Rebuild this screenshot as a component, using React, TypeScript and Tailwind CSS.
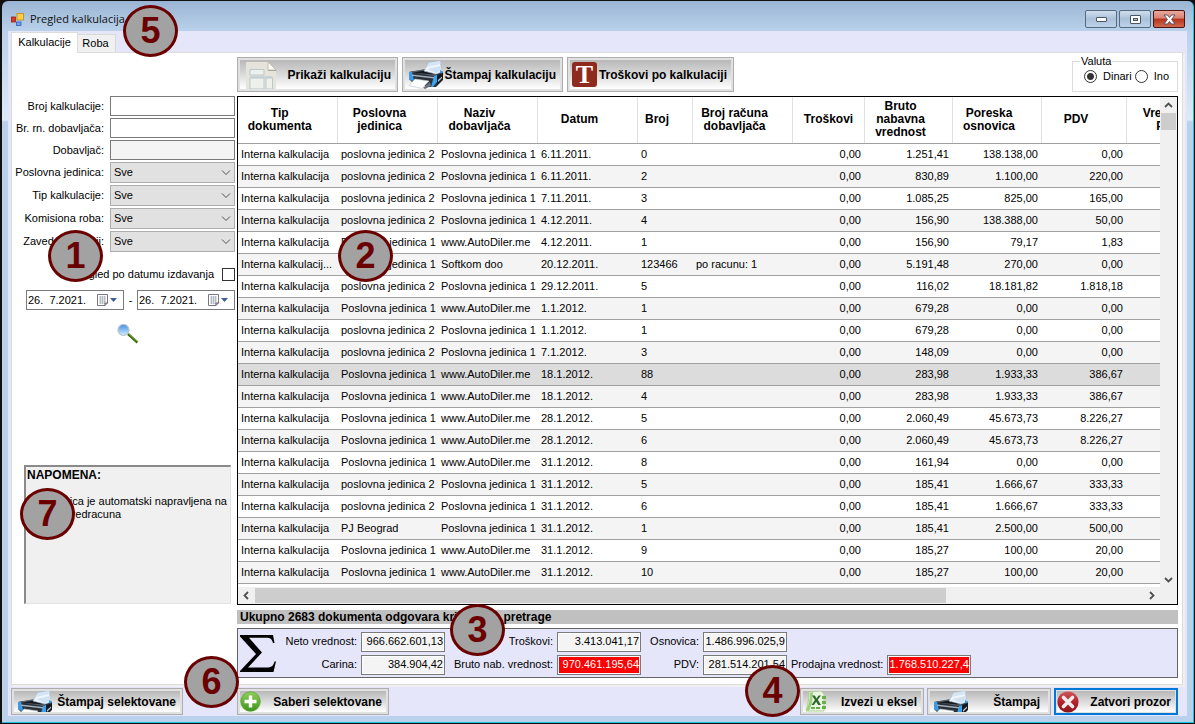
import React from "react";

type Row = [string, string, string, string, string, string, string, string, string, string];

const IK = "Interna kalkulacija";
const P1 = "Poslovna jedinica 1";
const P2 = "poslovna jedinica 2";
const AD = "www.AutoDiler.me";

const rows: Row[] = [
  [IK, P2, P1, "6.11.2011.", "0", "", "0,00", "1.251,41", "138.138,00", "0,00"],
  [IK, P2, P1, "6.11.2011.", "2", "", "0,00", "830,89", "1.100,00", "220,00"],
  [IK, P2, P1, "7.11.2011.", "3", "", "0,00", "1.085,25", "825,00", "165,00"],
  [IK, P2, P1, "4.12.2011.", "4", "", "0,00", "156,90", "138.388,00", "50,00"],
  [IK, P1, AD, "4.12.2011.", "1", "", "0,00", "156,90", "79,17", "1,83"],
  ["Interna kalkulacij...", P1, "Softkom doo", "20.12.2011.", "123466", "po racunu: 1", "0,00", "5.191,48", "270,00", "0,00"],
  [IK, P2, P1, "29.12.2011.", "5", "", "0,00", "116,02", "18.181,82", "1.818,18"],
  [IK, P1, AD, "1.1.2012.", "1", "", "0,00", "679,28", "0,00", "0,00"],
  [IK, P2, P1, "1.1.2012.", "1", "", "0,00", "679,28", "0,00", "0,00"],
  [IK, P2, P1, "7.1.2012.", "3", "", "0,00", "148,09", "0,00", "0,00"],
  [IK, P1, AD, "18.1.2012.", "88", "", "0,00", "283,98", "1.933,33", "386,67"],
  [IK, P1, AD, "18.1.2012.", "4", "", "0,00", "283,98", "1.933,33", "386,67"],
  [IK, P1, AD, "28.1.2012.", "5", "", "0,00", "2.060,49", "45.673,73", "8.226,27"],
  [IK, P1, AD, "28.1.2012.", "6", "", "0,00", "2.060,49", "45.673,73", "8.226,27"],
  [IK, P1, AD, "31.1.2012.", "8", "", "0,00", "161,94", "0,00", "0,00"],
  [IK, P2, P1, "31.1.2012.", "5", "", "0,00", "185,41", "1.666,67", "333,33"],
  [IK, P2, P1, "31.1.2012.", "6", "", "0,00", "185,41", "1.666,67", "333,33"],
  [IK, "PJ Beograd", P1, "31.1.2012.", "1", "", "0,00", "185,41", "2.500,00", "500,00"],
  [IK, P1, AD, "31.1.2012.", "9", "", "0,00", "185,27", "100,00", "20,00"],
  [IK, P1, AD, "31.1.2012.", "10", "", "0,00", "185,27", "100,00", "20,00"],
];

const columns = [
  { title: "Tip\ndokumenta", width: "w-[99px] pr-4" },
  { title: "Poslovna\njedinica", width: "w-[100px] pr-4" },
  { title: "Naziv\ndobavljača", width: "w-[100px] pr-4" },
  { title: "Datum", width: "w-[100px] pr-4" },
  { title: "Broj", width: "w-[55px] pr-4" },
  { title: "Broj računa\ndobavljača", width: "w-[100px] pr-4" },
  { title: "Troškovi", width: "w-[72px] pr-0" },
  { title: "Bruto\nnabavna\nvrednost", width: "w-[88px] pr-4" },
  { title: "Poreska\nosnovica", width: "w-[89px] pr-4" },
  { title: "PDV", width: "w-[85px] pr-4" },
  { title: "Vrednost\nPDV", width: "w-[100px] pr-4" },
];

function PrinterIcon({ cropped = false }: { cropped?: boolean }) {
  return (
    <svg
      className={cropped ? "ml-1 h-[21px] w-[34px] shrink-0" : "ml-1 h-7 w-[34px] shrink-0"}
      viewBox={cropped ? "0 0 34 21" : "0 0 34 28"}
      aria-hidden="true"
    >
      <path d="M0 11 5 10 29 8 34 11 34 19 27 26 20 26 3 21 0 18Z" fill="#2a3038" />
      <path d="M1 11 16 8 32 10 25 15Z" fill="#57616c" />
      <path d="M4 11.500 16 9.500 28 11 24 13.500Z" fill="#14171b" />
      <path d="M15 10 19.500 2 31 0 33 11 27 13Z" fill="#f1f6fb" stroke="#a6bfd8" strokeWidth=".7" />
      <path d="M19.500 2 31 0 31.500 3 18 6Z" fill="#d3e5f6" />
      <path d="M18 8 31.500 5 32.500 9 27 12Z" fill="#cfe2f4" />
      <path d="M0 11 3 11 5 19 3 20 0 18Z" fill="#3b9be8" />
      <path d="M25 15 28 14 28 21 24 26 22 26Z" fill="#3aa2f2" />
      <path d="M31 9 34 11 34 14 31 12Z" fill="#3a93df" />
      <path d="M28 15 34 11.500 34 18 28 24Z" fill="#161a1f" />
      <path d="M3 13.500 25 16 25 17.500 3 15Z" fill="#a3adb8" />
      <path d="M6 18 20 20 13 27.500 0 24.500Z" fill="#fcfdfe" stroke="#bcc5ce" strokeWidth=".6" />
      <path d="M14 27 21 21 22 25 16 28Z" fill="#6d7680" />
      <path d="M29 19 33 15.500 33 17 29 21Z" fill="#c3c9d0" />
    </svg>
  );
}

function DocumentIcon() {
  return (
    <svg className="ml-1.5 h-[27px] w-[30px] shrink-0 self-end" viewBox="0 0 30 27" aria-hidden="true">
      <path d="M0 0H22L30 8V27H0Z" fill="#e5e3da" />
      <path d="M22 0 30 8H22Z" fill="#fbfaf5" stroke="#b9b6aa" strokeWidth=".8" />
      <path d="M22 8.500H30" stroke="#a9a69a" />
      <path d="M4 7.500H18V13H4ZM4 16H18V27H4ZM20 16H26.500V27H20Z" fill="#eef0ec" stroke="#b7cad1" />
      <path d="M4 15H26.500" stroke="#b4c8d0" />
    </svg>
  );
}

function LetterIcon() {
  return (
    <span className="ml-0.5 flex h-[25px] w-[25px] shrink-0 items-center justify-center rounded-[3px] bg-[#8f2b1e]">
      <span className="font-['Liberation_Serif',serif] text-[26px] leading-[25px] font-bold text-white">T</span>
    </span>
  );
}

function PlusIcon() {
  return (
    <svg className="h-[21px] w-[21px] shrink-0" viewBox="0 0 21 21" aria-hidden="true">
      <defs>
        <linearGradient id="plusFill" x1="0" y1="0" x2="0" y2="1">
          <stop offset="0" stopColor="#8fd05c" />
          <stop offset="1" stopColor="#3f9416" />
        </linearGradient>
      </defs>
      <circle cx="10.500" cy="10.500" r="9.800" fill="url(#plusFill)" stroke="#5fa33a" strokeWidth=".8" />
      <path d="M8.800 4.500h3.400v4.300h4.300v3.400h-4.300v4.300H8.800v-4.300H4.500V8.800h4.300Z" fill="#fff" />
    </svg>
  );
}

function ExcelIcon() {
  return (
    <svg className="ml-0.5 h-[21px] w-[23px] shrink-0" viewBox="0 0 23 21" aria-hidden="true">
      <path d="M4 1 16 0 19 3V20H1C3 14 4 8 4 1Z" fill="#eaf5e2" stroke="#a9d08e" />
      <path d="M1 19C4 14 5 8 5 2L8 1 7 12 4 20Z" fill="#9cd07a" />
      <path d="M7 4.500h2.800l1.700 3 2-3H16l-3.200 4.300L16 14h-2.800l-2-3.300L9 14H6.500l3.400-5Z" fill="#2c6b2a" />
      <path d="M17 5h4v3h-4ZM17 10h4v3h-4ZM17 15h4v3h-4ZM11 16h4v2h-4ZM6 16h4v2H6Z" fill="#6cae4d" />
    </svg>
  );
}

function CloseCircleIcon() {
  return (
    <svg className="h-[22px] w-[22px] shrink-0" viewBox="0 0 22 22" aria-hidden="true">
      <defs>
        <linearGradient id="closeFill" x1="0" y1="0" x2="0" y2="1">
          <stop offset="0" stopColor="#d0575c" />
          <stop offset=".5" stopColor="#b5222a" />
          <stop offset="1" stopColor="#8a1218" />
        </linearGradient>
      </defs>
      <circle cx="11" cy="11" r="10.600" fill="url(#closeFill)" />
      <path d="M6.500 6.500 15.500 15.500M15.500 6.500 6.500 15.500" stroke="#ececec" strokeWidth="3.600" strokeLinecap="round" />
    </svg>
  );
}

function AppIcon() {
  return (
    <svg className="h-[13px] w-[13px] shrink-0" viewBox="0 0 13 13" aria-hidden="true">
      <rect x=".5" y="4" width="4" height="5" fill="#d43a2a" stroke="#a11c10" strokeWidth=".8" />
      <rect x="6" y=".5" width="6.500" height="6.500" fill="#f8cf4a" stroke="#c38a10" strokeWidth=".8" />
      <rect x="5.500" y="9" width="4.500" height="3.500" fill="#6f9df0" stroke="#2f5ec4" strokeWidth=".8" />
    </svg>
  );
}

function MagnifierIcon() {
  return (
    <svg className="h-5 w-[22px]" viewBox="0 0 22 20" aria-hidden="true">
      <defs>
        <linearGradient id="lens" x1="0" y1="0" x2="0" y2="1">
          <stop offset="0" stopColor="#3f8fe6" />
          <stop offset="1" stopColor="#d6f0ff" />
        </linearGradient>
      </defs>
      <path d="M11 10 20.500 18.500" stroke="#3d6b12" strokeWidth="2.400" />
      <path d="M11.500 9.500 20.500 17.500" stroke="#8cc04a" strokeWidth=".8" />
      <circle cx="6.500" cy="6" r="5.500" fill="url(#lens)" stroke="#b9c3cf" strokeWidth="1.200" />
    </svg>
  );
}

function CalendarIcon() {
  return (
    <svg className="h-3 w-5" viewBox="0 0 20 12" aria-hidden="true">
      <path d="M.5.500H10.500V9L8 11.500H.500Z" fill="#fff" stroke="#7b7480" />
      <path d="M2 3H9M2 5H9M2 7H9M2 9H8M3.500 2V10M5.500 2V10M7.500 2V10" stroke="#a9b1ba" strokeWidth=".8" />
      <path d="M8 11.500V9H10.500" fill="none" stroke="#5e5660" />
      <path d="M13 4H20L16.500 8Z" fill="#3f5f96" />
    </svg>
  );
}

function Chevron({ d }: { d: string }) {
  return (
    <svg className="h-[9px] w-[9px]" viewBox="0 0 9 9" fill="none" stroke="#505050" strokeWidth="1.800" aria-hidden="true">
      <path d={d} />
    </svg>
  );
}

function ActionButton({
  className,
  primary = false,
  icon,
  children,
}: {
  className: string;
  primary?: boolean;
  icon: React.ReactNode;
  children: React.ReactNode;
}) {
  return (
    <button
      type="button"
      className={`flex shrink-0 items-center justify-between overflow-hidden border bg-[#e1e1e1] p-0.5 text-[12px] leading-none font-bold text-black ${
        primary ? "border-[#0078d7] ring-1 ring-[#0078d7] ring-inset" : "border-[#adadad]"
      } ${className}`}
    >
      <span className="flex h-full w-full items-center justify-between bg-linear-to-b from-[#b8b8b8] via-[#dadada] to-white pr-1 whitespace-nowrap">
        {icon}
        <span>{children}</span>
      </span>
    </button>
  );
}

function TextField({ id, label, disabled = false }: { id: string; label: string; disabled?: boolean }) {
  return (
    <div className="flex items-center justify-end gap-1.5">
      <label htmlFor={id}>{label}</label>
      <input
        id={id}
        type="text"
        readOnly={disabled}
        className={`h-5 w-[125px] border border-[#7a7a7a] px-1 outline-none ${disabled ? "bg-[#f4f4f4]" : "bg-white"}`}
      />
    </div>
  );
}

function SelectField({ id, label }: { id: string; label: string }) {
  return (
    <div className="flex items-center justify-end gap-1.5">
      <label htmlFor={id}>{label}</label>
      <div className="relative h-[21px] w-[125px]">
        <select
          id={id}
          className="h-full w-full appearance-none border border-[#adadad] bg-[#e1e1e1] px-[3px] outline-none"
        >
          <option>Sve</option>
        </select>
        <svg
          className="pointer-events-none absolute top-2 right-1 h-[6px] w-[10px]"
          viewBox="0 0 10 6"
          fill="none"
          stroke="#505050"
          aria-hidden="true"
        >
          <path d="M1 .5 5 4.500 9 .5" />
        </svg>
      </div>
    </div>
  );
}

function DateField({ label }: { label: string }) {
  return (
    <div className="flex h-5 w-[98px] items-center border border-[#7a7a7a] bg-white pr-1.5 pl-px">
      <input
        type="text"
        aria-label={label}
        defaultValue="26.  7.2021."
        className="w-0 min-w-0 flex-1 outline-none"
      />
      <button type="button" aria-label={`${label}: kalendar`}>
        <CalendarIcon />
      </button>
    </div>
  );
}

function Total({ id, label, value, highlight = false }: { id: string; label: string; value: string; highlight?: boolean }) {
  return (
    <>
      <label htmlFor={id} className="text-right whitespace-nowrap">
        {label}
      </label>
      <div className="flex h-5 border border-[#7a7a7a] bg-white p-px">
        <input
          id={id}
          readOnly
          value={value}
          className={`w-full min-w-0 text-right outline-none ${highlight ? "bg-[#ff0000] text-white" : "bg-[#f4f4f4]"}`}
        />
      </div>
    </>
  );
}

function Badge({ n, className }: { n: number; className: string }) {
  return (
    <span
      className={`absolute flex h-[52px] w-[55px] items-center justify-center rounded-[50%] border-[3px] border-[#6b0000] bg-[#a2a2a2] text-[36px] leading-none font-bold text-[#6b0000] ${className}`}
    >
      {n}
    </span>
  );
}

export default function App() {
  return (
    <div className="relative min-h-screen bg-[#101010] pt-px pr-px pb-px pl-0.5 font-['Liberation_Sans',Arial,sans-serif] text-[11px] leading-[13px] text-black">
      <div className="flex min-h-[calc(100vh-2px)] flex-col rounded-t-[6px] border-r border-b border-[#1cc3e0] bg-[linear-gradient(to_bottom,#9ab4d3_0px,#b9d1ea_30px,#dde9f6_119px,#b9d1ea_121px)]">
        <header className="flex h-[30px] items-center gap-1.5 pt-1.5 pr-2 pl-[9px]">
          <AppIcon />
          <h1 className="flex-1 font-['Open_Sans',sans-serif] text-[11px] leading-4 text-[#101010]">Pregled kalkulacija</h1>
          <div className="flex gap-0.5">
            <button
              type="button"
              aria-label="Minimiziraj"
              className="flex h-[18px] w-8 items-center justify-center rounded-[2px] border border-[#56697f] bg-linear-to-b from-[#cfdeee] via-[#a9c0d9] to-[#bdd3ea]"
            >
              <svg className="h-[5px] w-[11px]" viewBox="0 0 11 5" aria-hidden="true">
                <rect x=".5" y=".5" width="10" height="4" rx=".5" fill="#fff" stroke="#4b5663" />
              </svg>
            </button>
            <button
              type="button"
              aria-label="Maksimiziraj"
              className="flex h-[18px] w-8 items-center justify-center rounded-[2px] border border-[#56697f] bg-linear-to-b from-[#cfdeee] via-[#a9c0d9] to-[#bdd3ea]"
            >
              <svg className="h-[9px] w-[11px]" viewBox="0 0 11 9" aria-hidden="true">
                <rect x=".5" y=".5" width="10" height="8" rx=".5" fill="#fff" stroke="#4b5663" />
                <rect x="3.500" y="3.500" width="4" height="2" fill="#a9c0d9" stroke="#4b5663" />
              </svg>
            </button>
            <button
              type="button"
              aria-label="Zatvori"
              className="flex h-[18px] w-8 items-center justify-center rounded-[2px] border border-[#4d1410] bg-[linear-gradient(to_bottom,#e8a99c,#d98172_45%,#b8321c_50%,#cf6a4e)]"
            >
              <svg className="h-[11px] w-[13px]" viewBox="0 0 13 11" aria-hidden="true">
                <path
                  d="M1 1h3.500l2 2.500 2-2.500H12L8.600 5.500 12 10H8.500l-2-2.500-2 2.500H1l3.400-4.500Z"
                  fill="#fff"
                  stroke="#5b5666"
                />
              </svg>
            </button>
          </div>
        </header>

        <div className="mx-1.5 mb-1.5 flex flex-1 flex-col bg-[#e6e6fa] px-[3px]">
          <div className="flex h-[21px] items-end" role="tablist">
            <button
              type="button"
              role="tab"
              aria-selected="true"
              className="z-10 -mb-px h-[21px] w-[67px] border border-b-0 border-[#dcdcdc] bg-white pb-0.5"
            >
              Kalkulacije
            </button>
            <button
              type="button"
              role="tab"
              aria-selected="false"
              className="h-[18px] w-[38px] border border-b-0 border-l-0 border-[#d9d9d9] bg-[#f0f0f0] pr-0.5"
            >
              Roba
            </button>
          </div>

          <div className="mr-px flex flex-1 border border-[#dcdcdc] bg-white pr-1 shadow-[2px_2px_0_#f0f0f0]">
            <aside className="flex w-[225px] shrink-0 flex-col pt-[43px] pr-0.5">
              <div className="flex flex-col gap-0.5">
                <TextField id="broj" label="Broj kalkulacije:" />
                <TextField id="racun" label="Br. rn. dobavljača:" />
                <TextField id="dobavljac" label="Dobavljač:" disabled />
                <SelectField id="jedinica" label="Poslovna jedinica:" />
                <SelectField id="tip" label="Tip kalkulacije:" />
                <SelectField id="komisiona" label="Komisiona roba:" />
                <SelectField id="zavedene" label="Zavedene u knji:" />
              </div>
              <label className="mt-4 flex items-center justify-end gap-2">
                Pregled po datumu izdavanja
                <input type="checkbox" className="h-[13px] w-[13px] appearance-none border border-[#333] bg-white" />
              </label>
              <div className="mt-[9px] flex items-center justify-end gap-1">
                <DateField label="Datum od" />
                <span className="w-[5px] text-center">-</span>
                <DateField label="Datum do" />
              </div>
              <button type="button" aria-label="Traži" className="mt-3.5 ml-[105px] w-[22px]">
                <MagnifierIcon />
              </button>
              <section className="mt-[121px] mr-1 ml-3 h-[139px] border border-t-2 border-l-2 border-[#e3e3e3] border-t-[#8a8a8a] border-l-[#8a8a8a] bg-[#f0f0f0] px-px pt-0.5">
                <h2 className="text-[12px] leading-[13px] font-bold">NAPOMENA:</h2>
                <p className="mt-[13px]">Otpremnica je automatski napravljena na osnovu predracuna</p>
              </section>
            </aside>

            <main className="flex min-w-0 flex-1 flex-col pt-1 pb-1.5">
              <div className="flex h-[35px] items-start gap-1">
                <ActionButton className="h-[35px] w-[161px]" icon={<DocumentIcon />}>
                  Prikaži kalkulaciju
                </ActionButton>
                <ActionButton className="h-[35px] w-[161px]" icon={<PrinterIcon />}>
                  Štampaj kalkulaciju
                </ActionButton>
                <ActionButton className="h-[35px] w-[167px]" icon={<LetterIcon />}>
                  Troškovi po kalkulaciji
                </ActionButton>
                <fieldset className="-mt-0.5 ml-auto h-[37px] w-[106px] border border-[#dcdcdc] pr-2 pl-[11px]">
                  <legend className="-ml-1 px-px">Valuta</legend>
                  <div className="flex h-4 items-center justify-between">
                    <label className="flex items-center gap-1.5">
                      <input
                        type="radio"
                        name="valuta"
                        defaultChecked
                        className="h-[13px] w-[13px] appearance-none rounded-full border border-[#333] bg-white checked:bg-[radial-gradient(circle,#333_3px,white_4px)]"
                      />
                      Dinari
                    </label>
                    <label className="flex items-center gap-1.5">
                      <input
                        type="radio"
                        name="valuta"
                        className="h-[13px] w-[13px] appearance-none rounded-full border border-[#333] bg-white checked:bg-[radial-gradient(circle,#333_3px,white_4px)]"
                      />
                      Ino
                    </label>
                  </div>
                </fieldset>
              </div>

              <div className="mt-1 flex flex-1 flex-col border border-black bg-white">
                <div className="flex flex-1">
                  <div className="w-0 min-w-0 flex-1 overflow-hidden pb-[3px]">
                    <table className="w-[988px] table-fixed border-collapse">
                      <thead>
                        <tr className="h-[46px]">
                          {columns.map((c) => (
                            <th
                              key={c.title}
                              className={`border-r border-b border-[#e0e0e0] border-b-[#a0a0a0] py-0 pl-px text-center align-middle text-[12px] leading-[13px] font-bold whitespace-pre ${c.width}`}
                            >
                              {c.title}
                            </th>
                          ))}
                        </tr>
                      </thead>
                      <tbody>
                        {rows.map((row, i) => (
                          <tr
                            key={i}
                            className={`h-[22px] border-b border-[#a0a0a0] ${
                              i === 10 ? "bg-[#dcdcdc]" : i % 2 ? "bg-[#f4f4f4]" : "bg-white"
                            }`}
                          >
                            {row.map((cell, j) => (
                              <td
                                key={j}
                                className={`py-0 align-middle whitespace-nowrap ${
                                  j > 5 ? "pr-[3px] text-right" : j === 0 ? "pl-[3px] text-left" : "pl-1 text-left"
                                }`}
                              >
                                {cell}
                              </td>
                            ))}
                            <td className="p-0" />
                          </tr>
                        ))}
                      </tbody>
                    </table>
                  </div>
                  <div className="flex w-[17px] shrink-0 flex-col items-center bg-[#f0f0f0]">
                    <span className="flex h-4 items-center">
                      <Chevron d="M1 6 4.500 2.500 8 6" />
                    </span>
                    <span className="h-[17px] w-[15px] bg-[#cdcdcd]" />
                    <span className="mt-auto flex h-4 items-center">
                      <Chevron d="M1 3 4.500 6.500 8 3" />
                    </span>
                  </div>
                </div>
                <div className="flex h-[17px] items-center bg-[#f0f0f0] pr-[17px]">
                  <span className="flex w-[17px] justify-center">
                    <Chevron d="M6 1 2.500 4.500 6 8" />
                  </span>
                  <span className="flex flex-1">
                    <span className="h-[15px] w-7/9 bg-[#cdcdcd]" />
                  </span>
                  <span className="flex w-[17px] justify-center">
                    <Chevron d="M3 1 6.500 4.500 3 8" />
                  </span>
                </div>
              </div>

              <p className="mt-[5px] h-3.5 bg-[#c0c0c0] pl-[3px] text-[12px] leading-[14px] font-bold">
                Ukupno 2683 dokumenta odgovara kriterijima pretrage
              </p>

              <div className="mt-1 flex h-[50px] items-center border border-[#646464] bg-[#e6e6fa]">
                <svg className="mx-0.5 h-[37px] w-9 shrink-0" viewBox="0 0 36 37" aria-hidden="true">
                  <path
                    d="M0 0H33L34.500 8H33C32 4 30 2.800 26 2.800H9L22 17.500 8 32.500H27C31 32.500 33.500 31 34.500 26.500H36L33.500 37H0V36L16 19 0 1.500Z"
                    fill="#000"
                  />
                </svg>
                <div className="grid grid-cols-[79px_84px_104px_84px_54px_84px_92px_84px] items-center gap-x-1 gap-y-[3px]">
                  <Total id="neto" label="Neto vrednost:" value="966.662.601,13" />
                  <Total id="troskovi" label="Troškovi:" value="3.413.041,17" />
                  <Total id="osnovica" label="Osnovica:" value="1.486.996.025,9" />
                  <span className="col-span-2" />
                  <Total id="carina" label="Carina:" value="384.904,42" />
                  <Total id="bruto" label="Bruto nab. vrednost:" value="970.461.195,64" highlight />
                  <Total id="pdv" label="PDV:" value="281.514.201,54" />
                  <Total id="prodajna" label="Prodajna vrednost:" value="1.768.510.227,4" highlight />
                </div>
              </div>
            </main>
          </div>

          <footer className="flex gap-[3px] pt-[3px] pr-1.5 pb-px">
            <ActionButton className="mr-[51px] h-[27px] w-[172px]" icon={<PrinterIcon cropped />}>
              Štampaj selektovane
            </ActionButton>
            <ActionButton className="h-[27px] w-[152px]" icon={<PlusIcon />}>
              Saberi selektovane
            </ActionButton>
            <ActionButton className="ml-auto h-[27px] w-[124px]" icon={<ExcelIcon />}>
              Izvezi u eksel
            </ActionButton>
            <ActionButton className="h-[27px] w-[124px]" icon={<PrinterIcon cropped />}>
              <span className="mr-1">Štampaj</span>
            </ActionButton>
            <ActionButton className="h-[27px] w-[124px]" primary icon={<CloseCircleIcon />}>
              Zatvori prozor
            </ActionButton>
          </footer>
        </div>
      </div>

      <Badge n={5} className="top-[5px] left-[123px]" />
      <Badge n={1} className="top-[230px] left-[48px]" />
      <Badge n={2} className="top-[230px] left-[338px]" />
      <Badge n={3} className="top-[604px] left-[450px]" />
      <Badge n={4} className="top-[665px] right-[395px]" />
      <Badge n={6} className="top-[656px] left-[184px]" />
      <Badge n={7} className="top-[488px] left-[20px]" />
    </div>
  );
}
